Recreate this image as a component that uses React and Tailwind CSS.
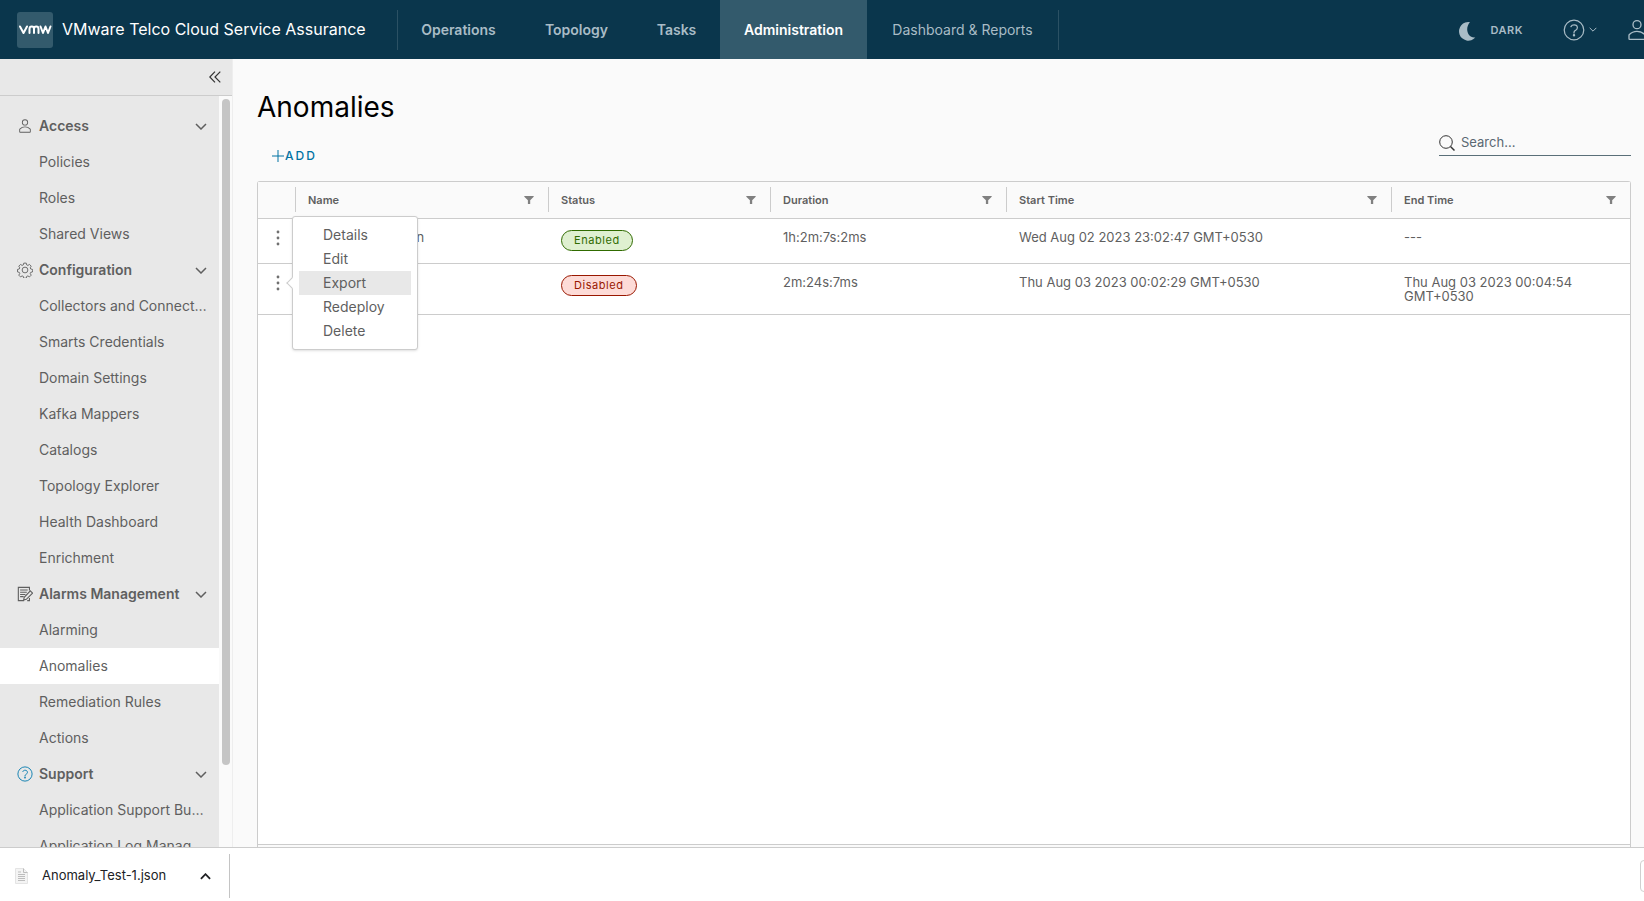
import { useState } from "react";

const tabs = [
  { label: "Operations", className: "w-[123px] font-semibold" },
  { label: "Topology", className: "w-[113px] font-semibold" },
  { label: "Tasks", className: "w-[87px] font-semibold" },
  { label: "Administration", className: "w-[147px] font-semibold", active: true },
  { label: "Dashboard & Reports", className: "w-[191px]" },
];

const groups = [
  { title: "Access", icon: UserIcon, items: ["Policies", "Roles", "Shared Views"] },
  {
    title: "Configuration",
    icon: CogIcon,
    items: [
      "Collectors and Connect…",
      "Smarts Credentials",
      "Domain Settings",
      "Kafka Mappers",
      "Catalogs",
      "Topology Explorer",
      "Health Dashboard",
      "Enrichment",
    ],
  },
  {
    title: "Alarms Management",
    icon: NoteEditIcon,
    items: ["Alarming", "Anomalies", "Remediation Rules", "Actions"],
  },
  {
    title: "Support",
    icon: HelpIcon,
    iconClass: "text-[#0079ad]",
    items: ["Application Support Bu…", "Application Log Manag…"],
  },
];

const columns = [
  { label: "Name", className: "w-[253px]" },
  { label: "Status", className: "w-[222px]" },
  { label: "Duration", className: "w-[236px]" },
  { label: "Start Time", className: "w-[385px]" },
  { label: "End Time", className: "" },
];

const rows = [
  {
    id: 1,
    name: "Anomaly Detection",
    enabled: true,
    duration: "1h:2m:7s:2ms",
    start: "Wed Aug 02 2023 23:02:47 GMT+0530",
    end: "---",
  },
  {
    id: 2,
    name: "Anomaly_Test-1",
    enabled: false,
    duration: "2m:24s:7ms",
    start: "Thu Aug 03 2023 00:02:29 GMT+0530",
    end: "Thu Aug 03 2023 00:04:54 GMT+0530",
  },
];

const actions = ["Details", "Edit", "Export", "Redeploy", "Delete"];

function UserIcon({ className }) {
  return (
    <svg viewBox="0 0 36 36" fill="currentColor" className={className} aria-hidden="true">
      <path d="M18 17a7 7 0 1 0-7-7 7 7 0 0 0 7 7Zm0-12a5 5 0 1 1-5 5 5 5 0 0 1 5-5Z" />
      <path d="M30.47 24.37a17.16 17.16 0 0 0-24.93 0A2 2 0 0 0 5 25.74V31a2 2 0 0 0 2 2h22a2 2 0 0 0 2-2v-5.26a2 2 0 0 0-.53-1.37ZM29 31H7v-5.27a15.17 15.17 0 0 1 22 0Z" />
    </svg>
  );
}

function CogIcon({ className }) {
  return (
    <svg viewBox="0 0 36 36" fill="none" stroke="currentColor" strokeWidth="2" strokeLinejoin="round" className={className} aria-hidden="true">
      <circle cx="18" cy="18" r="6.5" />
      <path d="M15.2 2.5h5.6l1 4.1 2.6 1.1 3.7-2.2 3.9 3.9-2.2 3.7 1.1 2.6 4.1 1v2.9l-.1 2.7-4 1-1.1 2.6 2.2 3.7-3.9 3.9-3.7-2.2-2.6 1.1-1 4.1h-5.6l-1-4.1-2.6-1.1-3.7 2.2L4 29.6l2.2-3.7-1.1-2.6-4-1v-5.6l4-1 1.1-2.6L4 9.4l3.9-3.9 3.7 2.2 2.6-1.1Z" />
    </svg>
  );
}

function NoteEditIcon({ className }) {
  return (
    <svg viewBox="0 0 36 36" fill="none" stroke="currentColor" strokeWidth="2.5" className={className} aria-hidden="true">
      <path d="M28 10V3H3v30h13M28 27v6h-5" />
      <path d="M7 9h17M7 14h15M7 19h12M7 24h8" />
      <path d="m30 11 5 5-14 14-6 1.5 1.2-6.2Z" />
    </svg>
  );
}

function HelpIcon({ className }) {
  return (
    <svg viewBox="0 0 36 36" fill="none" stroke="currentColor" strokeWidth="2" className={className} aria-hidden="true">
      <circle cx="18" cy="18" r="16" />
      <path d="M13 12.5c1-2 3-3 5.2-3 3 0 5.3 1.9 5.3 4.7 0 2.6-1.9 3.7-3.5 4.8-1.2.8-2 1.6-2 3.2V23" strokeLinecap="round" />
      <circle cx="18" cy="26.5" r="1" fill="currentColor" />
    </svg>
  );
}

function MoonIcon({ className }) {
  return (
    <svg viewBox="0 0 17 20" fill="currentColor" className={className} aria-hidden="true">
      <path d="M11 1.2A9.3 9.3 0 1 0 16.300 16.500C8.500 17.500 5.500 7 11 1.200Z" />
    </svg>
  );
}

function Chevron({ className, d = "m1 1 5 5 5-5" }) {
  return (
    <svg viewBox="0 0 12 7" fill="none" stroke="currentColor" className={className} aria-hidden="true">
      <path d={d} />
    </svg>
  );
}

function FilterIcon() {
  return (
    <svg viewBox="0 0 10 9" fill="currentColor" className="w-[10px] h-[9px]" aria-hidden="true">
      <path d="M.3 1h9.400v.8L6.200 5.200v3.800H3.900V5.200L.3 1.800Z" />
    </svg>
  );
}

function KebabIcon() {
  return (
    <svg viewBox="0 0 4 16" fill="currentColor" className="w-1 h-4" aria-hidden="true">
      <circle cx="2" cy="2" r="1.400" />
      <circle cx="2" cy="8" r="1.400" />
      <circle cx="2" cy="14" r="1.400" />
    </svg>
  );
}

function Header() {
  return (
    <header className="h-[59px] shrink-0 flex items-center bg-[#0a364c] text-[#a9bcc6] overflow-hidden">
      <div className="w-[397px] shrink-0 flex items-center pl-[17px] gap-[9px]">
        <span className="size-9 rounded-[3px] bg-[#335a6c] text-white flex items-center justify-center">
          <svg viewBox="0 0 34 12" fill="none" stroke="currentColor" strokeWidth="2" strokeLinecap="round" strokeLinejoin="round" className="w-[34px] h-3" aria-hidden="true">
            <path d="M2 2.500 5.500 9 9 2.500" />
            <path d="M11.500 9V5c0-3.200 4.500-3.200 4.500 0v4M16 5c0-3.200 4.500-3.200 4.500 0v4" />
            <path d="M22.500 2.500 25 9l2.500-6.500L30 9l2.500-6.500" />
          </svg>
        </span>
        <span className="text-base leading-5 pb-[2px] text-white whitespace-nowrap">VMware Telco Cloud Service Assurance</span>
      </div>
      <nav className="h-full flex items-center">
        <span className="w-px h-10 -mr-px bg-[#2b5164]" />
        {tabs.map((tab) => (
          <a
            key={tab.label}
            href="#"
            className={`h-full flex items-center justify-center text-sm whitespace-nowrap ${tab.className} ${
              tab.active ? "bg-[#335a6c] text-white" : ""
            }`}
          >
            {tab.label}
          </a>
        ))}
        <span className="w-px h-10 bg-[#2b5164]" />
      </nav>
      <div className="ml-auto h-full flex items-center shrink-0">
        <button className="flex items-center gap-[14px] pt-[2px] text-[11px] font-semibold tracking-wider">
          <MoonIcon className="w-[17px] h-5" />
          DARK
        </button>
        <button aria-label="Help" className="ml-10 flex items-center gap-1">
          <HelpIcon className="size-[22px]" />
          <Chevron className="w-2 h-[5px] stroke-[1.5]" />
        </button>
        <button aria-label="Account" className="ml-7 -mr-[5px]">
          <UserIcon className="size-6" />
        </button>
      </div>
    </header>
  );
}

function Sidebar() {
  return (
    <aside className="w-[233px] shrink-0 flex flex-col bg-[#e8e8e8] border-r border-[#eeeeee] text-[#5f5f5f]">
      <div className="h-[37px] shrink-0 flex items-center justify-end pr-[11px] border-b border-[#cccccc]">
        <button aria-label="Collapse navigation" className="text-[#333333]">
          <svg viewBox="0 0 12 12" fill="none" stroke="currentColor" strokeWidth="1.200" className="size-3" aria-hidden="true">
            <path d="M6 .7.800 6 6 11.300M11.300.700 6 6l5.300 5.300" />
          </svg>
        </button>
      </div>
      <div className="flex-1 min-h-0 flex">
        <nav className="flex-1 min-w-0 pt-3 overflow-hidden text-sm">
          {groups.map(({ title, icon: Icon, iconClass, items }) => (
            <div key={title}>
              <button className="w-full h-9 flex items-center pl-[17px] pr-3 font-semibold text-left">
                <Icon className={`size-4 mr-[6px] ${iconClass || ""}`} />
                <span className="flex-1 whitespace-nowrap">{title}</span>
                <Chevron className="w-3 h-[7px] stroke-[1.5]" />
              </button>
              {items.map((item) => (
                <a
                  key={item}
                  href="#"
                  className={`h-9 flex items-center pl-[39px] whitespace-nowrap ${item === "Anomalies" ? "bg-white" : ""}`}
                >
                  {item}
                </a>
              ))}
            </div>
          ))}
        </nav>
        <div className="w-[13px] pt-[3px] pl-[3px] bg-[#fafafa]">
          <div className="w-2 h-[89%] rounded-full bg-[#c5c5c5]" />
        </div>
      </div>
    </aside>
  );
}

function ActionMenu() {
  return (
    <div className="absolute z-10 left-[34px] top-[-48px] w-[126px] p-[6px] bg-white border border-[#cccccc] rounded-[3px] shadow-sm">
      <span className="absolute left-[-5px] top-[62px] size-2 rotate-45 bg-white border-l border-b border-[#cccccc]" />
      {actions.map((action) => (
        <button
          key={action}
          className={`relative block w-full h-6 pl-6 text-sm text-left ${action === "Export" ? "bg-[#e8e8e8]" : ""}`}
        >
          {action}
        </button>
      ))}
    </div>
  );
}

function StatusBadge({ enabled }) {
  return (
    <span
      className={`inline-flex items-center h-[21px] px-3 rounded-full border text-[11px] tracking-wider ${
        enabled ? "bg-[#dff0d0] border-[#306b00] text-[#306b00]" : "bg-[#fddbd7] border-[#991700] text-[#991700]"
      }`}
    >
      {enabled ? "Enabled" : "Disabled"}
    </span>
  );
}

function Grid({ openRow, onToggle }) {
  return (
    <div className="flex-1 flex flex-col border border-b-0 border-[#cccccc] rounded-t-[3px] bg-white">
      <table className="w-full table-fixed border-collapse text-[13px] leading-[14px] text-[#5f5f5f]">
        <thead className="bg-[#fafafa]">
          <tr className="h-9 border-b border-[#cccccc]">
            <th className="w-[37px]" />
            {columns.map((col) => (
              <th key={col.label} className={`p-0 text-[11px] font-semibold text-left ${col.className}`}>
                <div className="h-[25px] flex items-center justify-between pl-3 pr-[14px] border-l border-[#cccccc]">
                  {col.label}
                  <button aria-label={`Filter ${col.label}`} className="text-[#808080]">
                    <FilterIcon />
                  </button>
                </div>
              </th>
            ))}
          </tr>
        </thead>
        <tbody>
          {rows.map((row) => (
            <tr key={row.id} className="border-b border-[#cccccc] align-top">
              <td className="relative p-0">
                <button
                  aria-label={`Actions for row ${row.id}`}
                  className="w-full flex justify-center pl-[2px] pt-[11px] text-[#707070]"
                  onClick={() => onToggle(row.id)}
                >
                  <KebabIcon />
                </button>
                {openRow === row.id && <ActionMenu />}
              </td>
              <td className="pl-[13px] py-[11px]">{row.name}</td>
              <td className="pl-[13px] pt-[11px] pb-3">
                <StatusBadge enabled={row.enabled} />
              </td>
              <td className="pl-[13px] py-[11px]">{row.duration}</td>
              <td className="pl-[13px] py-[11px]">{row.start}</td>
              <td className="pl-[13px] pr-3 py-[11px]">{row.end}</td>
            </tr>
          ))}
        </tbody>
      </table>
      <div className="mt-auto h-[3px] bg-[#fafafa] border-t border-[#cccccc]" />
    </div>
  );
}

function DownloadBar() {
  return (
    <footer className="h-[54px] shrink-0 flex items-center pt-[3px] border-t border-[#cccccc] bg-white overflow-hidden">
      <div className="w-[230px] h-11 flex items-center pl-[15px] pr-[18px] border-r border-[#c4c4c4] text-[13px] text-[#202124]">
        <svg viewBox="0 0 13 16" className="w-[13px] h-4 mr-[14px]" aria-hidden="true">
          <path d="M.5.500h8l4 4v11H.5Z" fill="#f4f4f4" stroke="#e4e4e4" />
          <path d="M8.500.500v4h4M3 4h3M3 6.500h7M3 8.500h7M3 10.500h7M3 12.500h7" fill="none" stroke="#bdbdbd" />
        </svg>
        <span className="flex-1">Anomaly_Test-1.json</span>
        <button aria-label="Download options">
          <Chevron className="w-[11px] h-[7px] stroke-2" d="m1 6 5-5 5 5" />
        </button>
      </div>
      <button aria-label="Show all" className="ml-auto -mr-2 w-3 h-8 border border-[#d0d0d0] rounded-[4px]" />
    </footer>
  );
}

export default function App() {
  const [openRow, setOpenRow] = useState(2);
  const toggleRow = (id) => setOpenRow(openRow === id ? null : id);

  return (
    <div className="h-screen flex flex-col overflow-hidden bg-[#fafafa] font-['Inter',sans-serif]">
      <Header />
      <div className="flex-1 min-h-0 flex">
        <Sidebar />
        <main className="flex-1 min-w-0 flex flex-col pl-6 pr-[13px] pt-7">
          <h1 className="text-[28px] leading-10 text-black">Anomalies</h1>
          <div className="h-[54px] flex items-start justify-between">
            <button className="mt-[19px] ml-[14px] flex items-center text-xs font-medium leading-5 tracking-[2px] text-[#0072a3]">
              <svg viewBox="0 0 14 14" fill="none" stroke="currentColor" className="size-[14px]" aria-hidden="true">
                <path d="M7 1v12M1 7h12" />
              </svg>
              ADD
            </button>
            <label className="w-48 h-[26px] mt-[3px] flex items-center gap-[6px] border-b border-[#5a6f78] text-[#333333]">
              <svg viewBox="0 0 16 16" fill="none" stroke="currentColor" className="size-4 shrink-0" aria-hidden="true">
                <circle cx="7" cy="7" r="6.300" />
                <path d="m11.500 11.500 4 4" strokeWidth="1.500" />
              </svg>
              <input
                type="text"
                aria-label="Search"
                placeholder="Search..."
                className="w-full text-[13px] bg-transparent outline-none placeholder:text-[#5a6872]"
              />
            </label>
          </div>
          <Grid openRow={openRow} onToggle={toggleRow} />
        </main>
      </div>
      <DownloadBar />
    </div>
  );
}
